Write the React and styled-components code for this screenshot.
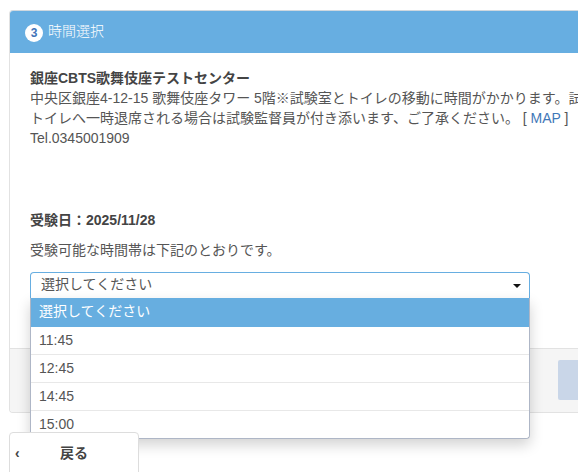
import React from 'react'
import styled, { createGlobalStyle } from 'styled-components'

const GlobalStyle = createGlobalStyle`
  html, body {
    margin: 0;
    height: 472px;
    overflow: hidden;
    background: #fff;
  }

  body {
    font-family: "Liberation Sans", "Noto Sans CJK JP", sans-serif;
    font-size: 14px;
    line-height: 20px;
    color: #444;
  }
`

const Page = styled.div`
  width: 900px;
  padding: 10px 0 0 9px;
`

const Panel = styled.section`
  border: 1px solid #e2e2e2;
  border-top-color: #cfd8df;
  border-radius: 4px;
  background: #fff;
`

const PanelHeader = styled.header`
  height: 42px;
  display: flex;
  align-items: center;
  gap: 5px;
  padding: 0 15px;
  background: #67aee1;
  color: #fff;
  border-radius: 3px 3px 0 0;
`

const StepBadge = styled.span`
  width: 18px;
  height: 18px;
  margin-top: 1px;
  border-radius: 50%;
  background: #fff;
  color: #3f73b8;
  font-size: 12px;
  font-weight: 700;
  line-height: 18px;
  text-align: center;
`

const PanelTitle = styled.span`
  padding-bottom: 3px;
  font-weight: 300;
`

const PanelBody = styled.div`
  padding: 15px 20px 50px;
`

const Address = styled.p`
  margin: 0 0 62px;
  white-space: nowrap;
  color: #555;
`

const Strong = styled.strong`
  color: #444;
`

const MapLink = styled.a`
  color: #3f78b8;
  text-decoration: none;
`

const ExamDate = styled.p`
  margin: 0 0 10px;
  font-weight: 700;
`

const Note = styled.p`
  margin: 0 0 12px;
  color: #555;
`

const SelectWrap = styled.div`
  position: relative;
  width: 500px;
`

const SelectBox = styled.div`
  height: 26px;
  box-sizing: border-box;
  display: flex;
  align-items: center;
  justify-content: space-between;
  padding: 0 8px 3px 10px;
  border: 1px solid #67aee1;
  border-bottom: 0;
  border-radius: 4px 4px 0 0;
  color: #555;
`

const Caret = styled.span`
  width: 0;
  height: 0;
  border-left: 4px solid transparent;
  border-right: 4px solid transparent;
  border-top: 4px solid #111;
  margin-top: 3px;
`

const Dropdown = styled.ul`
  position: absolute;
  top: 26px;
  left: 0;
  right: 0;
  margin: 0;
  padding: 0;
  list-style: none;
  background: #fff;
  border: 1px solid #aeb6c6;
  border-top: 0;
  border-radius: 0 0 4px 4px;
  box-shadow: 0 6px 14px rgba(0, 0, 0, 0.18);
`

const Option = styled.li`
  height: 28px;
  box-sizing: border-box;
  padding: 0 8px;
  line-height: 27px;
  color: ${({ $active }) => ($active ? '#fff' : '#555')};
  background: ${({ $active }) => ($active ? '#67aee0' : '#fff')};
  border-bottom: 1px solid #e8e8e8;

  &:first-child {
    height: 29px;
    border-bottom: 0;
  }

  &:last-child {
    height: 27px;
    border-bottom: 0;
    border-radius: 0 0 4px 4px;
  }
`

const PanelFooter = styled.footer`
  height: 64px;
  box-sizing: border-box;
  padding: 11px 0 0 548px;
  background: #f5f5f5;
  border-top: 1px solid #e2e2e2;
  border-radius: 0 0 3px 3px;
`

const NextButton = styled.div`
  width: 200px;
  height: 40px;
  background: #c9d6e8;
  border-radius: 2px;
`

const BackButton = styled.div`
  position: relative;
  width: 130px;
  height: 60px;
  box-sizing: border-box;
  margin-top: 19px;
  padding-top: 10px;
  border: 1px solid #ddd;
  border-radius: 4px 4px 0 0;
  background: #fff;
  font-weight: 700;
  text-align: center;
`

const BackArrow = styled.span`
  position: absolute;
  left: 5px;
  top: 10px;
  font-weight: 700;
`

const times = ['11:45', '12:45', '14:45', '15:00']

export default function App() {
  return (
    <Page>
      <GlobalStyle />
      <Panel>
        <PanelHeader>
          <StepBadge>3</StepBadge>
          <PanelTitle>時間選択</PanelTitle>
        </PanelHeader>
        <PanelBody>
          <Address>
            <Strong>銀座CBTS歌舞伎座テストセンター</Strong>
            <br />
            中央区銀座4-12-15 歌舞伎座タワー 5階※試験室とトイレの移動に時間がかかります。試
            <br />
            トイレへ一時退席される場合は試験監督員が付き添います、ご了承ください。 [ <MapLink href="#">MAP</MapLink> ]
            <br />
            Tel.0345001909
          </Address>
          <ExamDate>受験日：2025/11/28</ExamDate>
          <Note>受験可能な時間帯は下記のとおりです。</Note>
          <SelectWrap>
            <SelectBox>
              選択してください
              <Caret />
            </SelectBox>
            <Dropdown>
              <Option $active>選択してください</Option>
              {times.map((time) => (
                <Option key={time}>{time}</Option>
              ))}
            </Dropdown>
          </SelectWrap>
        </PanelBody>
        <PanelFooter>
          <NextButton />
        </PanelFooter>
      </Panel>
      <BackButton>
        <BackArrow>‹</BackArrow>
        戻る
      </BackButton>
    </Page>
  )
}
